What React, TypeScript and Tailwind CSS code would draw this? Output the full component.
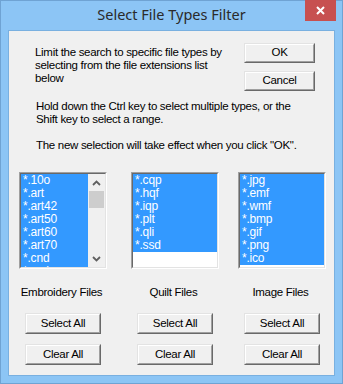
import React from "react";

const ui = "font-['Liberation_Sans',Arial,sans-serif]";

function Btn({ children, className = "" }: { children: React.ReactNode; className?: string }) {
  return (
    <div className={`flex border border-t-[#e3e3e3] border-l-[#e3e3e3] border-r-[#696969] border-b-[#696969] ${className}`}>
      <div className="flex flex-1 items-center justify-center border border-t-white border-l-white border-r-[#a0a0a0] border-b-[#a0a0a0] bg-[#f0f0f0] text-[11.5px] leading-none tracking-[-0.3px] text-black">
        {children}
      </div>
    </div>
  );
}

function Chevron({ up }: { up?: boolean }) {
  return (
    <svg width="9" height="6" viewBox="0 0 9 6" className="block">
      <path
        d={up ? "M1 5 L4.5 1.5 L8 5" : "M1 1 L4.5 4.5 L8 1"}
        fill="none"
        stroke="#606060"
        strokeWidth="1.8"
      />
    </svg>
  );
}

function ListBox({ items, scroll }: { items: string[]; scroll?: boolean }) {
  return (
    <div className="flex h-[97px] w-[88px] border border-t-[#a0a0a0] border-l-[#a0a0a0] border-r-white border-b-white">
      <div className="flex flex-1 overflow-hidden border border-t-[#696969] border-l-[#696969] border-r-[#e3e3e3] border-b-[#e3e3e3] bg-white">
        <div className="flex flex-1 flex-col overflow-hidden">
          {items.map((it) => (
            <div key={it} className="h-[13px] shrink-0 bg-[#3399ff] pl-[2px] text-[12px] leading-[13px] tracking-[-0.2px] text-white">
              {it}
            </div>
          ))}
        </div>
        {scroll && (
          <div className="flex w-[17px] shrink-0 flex-col bg-[#f0f0f0]">
            <div className="flex h-[17px] items-center justify-center">
              <Chevron up />
            </div>
            <div className="mx-[1px] h-[17px] bg-[#cdcdcd]" />
            <div className="flex-1" />
            <div className="flex h-[17px] items-center justify-center">
              <Chevron />
            </div>
          </div>
        )}
      </div>
    </div>
  );
}

function Column({ items, label, scroll, className = "" }: { items: string[]; label: string; scroll?: boolean; className?: string }) {
  return (
    <div className={`flex w-[88px] flex-col items-center ${className}`}>
      <ListBox items={items} scroll={scroll} />
      <div className="mt-[17px] whitespace-nowrap pr-[3px] text-[11.5px] leading-[13px] tracking-[-0.3px] text-black">{label}</div>
      <Btn className="mt-[14px] h-[21px] w-[76px]">Select All</Btn>
      <Btn className="mt-[10px] h-[21px] w-[76px]">Clear All</Btn>
    </div>
  );
}

export default function App() {
  return (
    <div className={`flex h-[384px] w-[343px] flex-col border border-[#6fa3d3] bg-[#8cc5f5] ${ui}`}>
      <div className="relative flex h-[29px] shrink-0 items-center justify-center">
        <span className="font-['Noto_Sans',sans-serif] text-[14.5px] leading-none text-[#2a2a2a] pb-[2px]">
          Select File Types Filter
        </span>
        <div className="absolute right-[6px] top-[-1px] flex h-[21px] w-[31px] items-center justify-center bg-[#c75050]">
          <svg width="9" height="9" viewBox="0 0 9 9">
            <path d="M1 1 L8 8 M8 1 L1 8" stroke="white" strokeWidth="2" />
          </svg>
        </div>
      </div>
      <div className="mx-[7px] mb-[7px] flex flex-1 flex-col border border-[#79b0e0] bg-[#f0f0f0] text-[11.5px] leading-[13px] tracking-[-0.3px] text-black">
        <div className="flex">
          <div className="ml-[26px] mt-[15px]">
            Limit the search to specific file types by
            <br />
            selecting from the file extensions list
            <br />
            below
          </div>
          <div className="ml-auto mr-[19px] mt-[12px] flex flex-col gap-[8px]">
            <Btn className="h-[20px] w-[71px]">OK</Btn>
            <Btn className="h-[20px] w-[71px]">Cancel</Btn>
          </div>
        </div>
        <div className="ml-[27px] mt-[9px]">
          Hold down the Ctrl key to select multiple types, or the
          <br />
          Shift key to select a range.
        </div>
        <div className="ml-[27px] mt-[13px]">The new selection will take effect when you click "OK".</div>
        <div className="ml-[10px] mt-[20px] flex">
          <Column
            items={["*.10o", "*.art", "*.art42", "*.art50", "*.art60", "*.art70", "*.cnd", "*.csd"]}
            label="Embroidery Files"
            scroll
          />
          <Column items={["*.cqp", "*.hqf", "*.iqp", "*.plt", "*.qli", "*.ssd"]} label="Quilt Files" className="ml-[24px]" />
          <Column
            items={["*.jpg", "*.emf", "*.wmf", "*.bmp", "*.gif", "*.png", "*.ico"]}
            label="Image Files"
            className="ml-[19px]"
          />
        </div>
      </div>
    </div>
  );
}
